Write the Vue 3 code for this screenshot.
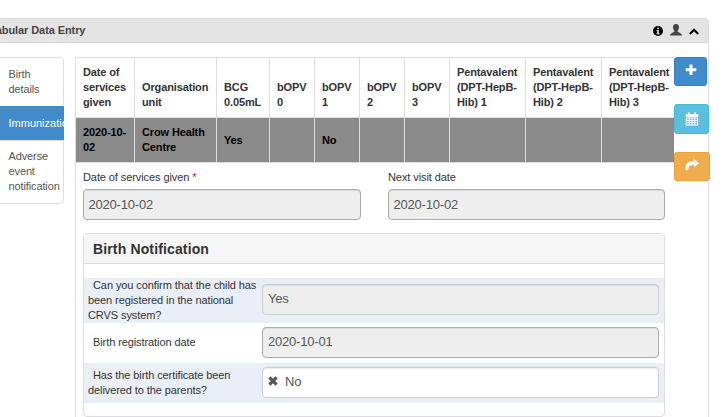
<script setup>
const columns = [
  { title: 'Date of services given', width: 59, value: '2020-10-02' },
  { title: 'Organisation unit', width: 82, value: 'Crow Health Centre' },
  { title: 'BCG 0.05mL', width: 53, value: 'Yes' },
  { title: 'bOPV 0', width: 45, value: '' },
  { title: 'bOPV 1', width: 45, value: 'No' },
  { title: 'bOPV 2', width: 45, value: '' },
  { title: 'bOPV 3', width: 45, value: '' },
  { title: 'Pentavalent (DPT-HepB-Hib) 1', width: 76, value: '' },
  { title: 'Pentavalent (DPT-HepB-Hib) 2', width: 76, value: '' },
  { title: 'Pentavalent (DPT-HepB-Hib) 3', width: 76, value: '' },
]
const stages = [
  { name: 'Birth details', active: false },
  { name: 'Immunization', active: true },
  { name: 'Adverse event notification', active: false },
]
</script>

<template>
  <div class="page">
    <section class="panel">
      <header class="panel-head">
        <span class="panel-title">Tabular Data Entry</span>
        <span class="head-icons">
          <svg class="i-info" viewBox="0 0 10 10"><circle cx="5" cy="5" r="5" /><path d="M3.500 4h2.300v3.200h.8v1H3.400v-1h.8V5h-.7zM4.200 1.600h1.600v1.500H4.200z" fill="#e3e3e3" /></svg>
          <svg class="i-user" viewBox="0 0 12 12"><path d="M6 0c1.900 0 3 1.200 3 3.200 0 1.500-.6 2.700-1.300 3.400v1c.3.700 1.300 1 2.300 1.300 1.200.5 1.900 1 2 2.600H0C.1 9.900.800 9.400 2 8.900c1-.3 2-.6 2.300-1.300v-1C3.600 5.900 3 4.700 3 3.200 3 1.200 4.100 0 6 0z" /></svg>
          <svg class="i-up" viewBox="0 0 10 8"><path d="M.8 7L5 2.800 9.200 7" fill="none" stroke="#000" stroke-width="2.100" /></svg>
        </span>
      </header>

      <div class="panel-body">
        <nav class="stages">
          <div v-for="s in stages" :key="s.name" class="stage" :class="{ active: s.active }">{{ s.name }}</div>
        </nav>

        <main class="entry">
          <div class="table-clip">
            <table>
              <colgroup><col v-for="c in columns" :key="c.title" :style="{ width: c.width + 'px' }" /></colgroup>
              <thead><tr><th v-for="c in columns" :key="c.title">{{ c.title }}</th></tr></thead>
              <tbody><tr><td v-for="c in columns" :key="c.title">{{ c.value }}</td></tr></tbody>
            </table>
          </div>

          <div class="dates">
            <label>Date of services given <b class="req">*</b><span class="field date">2020-10-02</span></label>
            <label>Next visit date<span class="field date">2020-10-02</span></label>
          </div>

          <section class="card">
            <h3>Birth Notification</h3>
            <div class="row tall">
              <span class="question">Can you confirm that the child has been registered in the national CRVS system?</span>
              <span class="field">Yes</span>
            </div>
            <div class="row plain">
              <span class="question">Birth registration date</span>
              <span class="field date">2020-10-01</span>
            </div>
            <div class="row">
              <span class="question">Has the birth certificate been delivered to the parents?</span>
              <span class="field open">
                <svg class="i-x" viewBox="0 0 10 10"><path d="M2.500 .3L5 2.800 7.500 .3 9.700 2.500 7.200 5l2.500 2.500-2.200 2.200L5 7.200 2.500 9.700.3 7.500 2.800 5 .3 2.500z" /></svg>No
              </span>
            </div>
          </section>
        </main>

        <aside class="actions">
          <button class="add"><svg viewBox="0 0 12 12" width="12" height="12"><path d="M4.500 .5h3v3.800h3.800v3H7.500v3.800h-3V7.300H.7v-3h3.800z" /></svg></button>
          <button class="cal"><svg viewBox="0 0 14 14" width="14" height="14"><path fill-rule="evenodd" d="M.8 2h2V.5h2V2h4.400V.5h2V2h2v3H.8zM.8 5.500h12.400V13.500H.8zM2 6.500V8h1.700V6.500zM4.700 6.500V8h1.800V6.500zM7.500 6.500V8h1.800V6.500zM10.300 6.500V8H12V6.500zM2 8.700v1.500h1.700V8.700zM4.700 8.700v1.500h1.800V8.700zM7.500 8.700v1.500h1.800V8.700zM10.300 8.700v1.500H12V8.700zM2 11v1.500h1.700V11zM4.700 11v1.500h1.800V11zM7.500 11v1.500h1.800V11zM10.300 11v1.500H12V11z" /></svg></button>
          <button class="share"><svg viewBox="0 0 14 12" width="14" height="12"><path d="M8.800 0L14 4.200 8.800 8.300V6C5.500 5.900 3.500 7 3 11.200H1C-.6 6 2.700 2.200 8.800 2.100z" /></svg></button>
        </aside>
      </div>
    </section>
  </div>
</template>

<style>
body { margin: 0; background: #fff; overflow: hidden; }
</style>

<style scoped>
* { box-sizing: border-box; }
.page {
  width: 725px;
  height: 417px;
  overflow: hidden;
  padding-top: 18px;
  font: 11px/15px "Liberation Sans", Arial, sans-serif;
  letter-spacing: -0.09px;
  color: #333;
}
.panel {
  width: 719px;
  height: 420px;
  margin-left: -10px;
  border: 1px solid #ddd;
  border-radius: 4px;
}
.panel-head {
  height: 24px;
  background: #e3e3e3;
  border-bottom: 1px solid #d8d8d8;
  display: flex;
  align-items: center;
  justify-content: space-between;
  padding: 0 9px 0 0;
}
.panel-title { font-weight: bold; color: #444; margin-left: -1px; }
.head-icons { display: flex; align-items: center; gap: 7px; }
.i-info { width: 10px; height: 10px; }
.i-user { width: 12px; height: 12px; fill: #444; margin-top: -2px; }
.i-up { width: 10px; height: 8px; }
.panel-body { display: flex; padding-top: 14px; }
.stages {
  width: 73px;
  flex: none;
  height: 147px;
  border: 1px solid #ddd;
  border-radius: 4px;
  color: #555;
}
.stage { padding: 9px 0 9px 16.500px; border-bottom: 1px solid #ddd; letter-spacing: -0.12px; }
.stage:last-child { border-bottom: 0; padding-top: 8px; }
.stage.active { background: #428bca; color: #fff; margin: -1px -1px 0 0; padding-top: 10px; overflow: hidden; letter-spacing: 0; }
.entry { width: 599px; flex: none; margin-left: 11px; height: 380px; border-left: 1px solid #ddd; }
.table-clip { width: 599px; overflow: hidden; margin-left: -1px; }
table { table-layout: fixed; width: 602px; border-collapse: separate; border-spacing: 0; border-top: 1px solid #ddd; }
th, td { border-left: 1px solid #ddd; border-bottom: 1px solid #ddd; padding: 7px 0 7px 7px; font-weight: bold; text-align: left; letter-spacing: -0.13px; }
th { height: 60px; vertical-align: bottom; }
td { height: 45px; background: #8a8a8a; color: #000; }
.dates { display: flex; gap: 27px; padding: 7px 0 0 7px; }
.dates label { width: 278px; }
.dates label + label { width: 277px; }
.req { color: red; font-weight: normal; }
.field {
  display: flex;
  align-items: center;
  height: 31px;
  padding: 0 5px 2px;
  border: 1px solid #ccc;
  border-radius: 4px;
  background: #eee;
  box-shadow: inset 0 1px 1px rgba(0, 0, 0, 0.075);
  color: #555;
  font-size: 13px;
  letter-spacing: -0.2px;
}
.date { border-color: #aaa; }
.dates .field { margin-top: 4px; padding: 0 4.500px; }
.open { background: #fff; }
.i-x { width: 10px; height: 10px; fill: #555; margin-right: 7px; }
.card { width: 582px; height: 184px; margin: 13px 0 0 7px; border: 1px solid #ddd; border-radius: 4px; }
.card h3 { margin: 0 0 14px; height: 30px; padding-left: 9px; border-bottom: 1px solid #ddd; background: #f5f5f5; font-size: 14px; line-height: 30px; letter-spacing: 0.14px; }
.row { display: flex; align-items: center; height: 40px; padding-left: 4px; background: #eaeef6; }
.row.tall { height: 45px; }
.row.plain { background: #fff; }
.row.plain .question { margin-bottom: 2px; }
.question { width: 174px; text-indent: 5px; }
.row .field { width: 397px; margin-bottom: 2px; }
.actions { display: flex; flex-direction: column; align-items: flex-start; gap: 18px; }
.actions button { margin: 0; padding: 0 0 3px; height: 29px; border: 1px solid; border-radius: 3px; display: flex; align-items: center; justify-content: center; }
.actions svg { fill: #fff; }
.actions .add { width: 33px; background: #428bca; border-color: #357ebd; }
.actions .cal { width: 35px; height: 30px; padding-bottom: 1px; background: #5bc0de; border-color: #46b8da; }
.actions .share { width: 36px; background: #f0ad4e; border-color: #eea236; }
</style>
